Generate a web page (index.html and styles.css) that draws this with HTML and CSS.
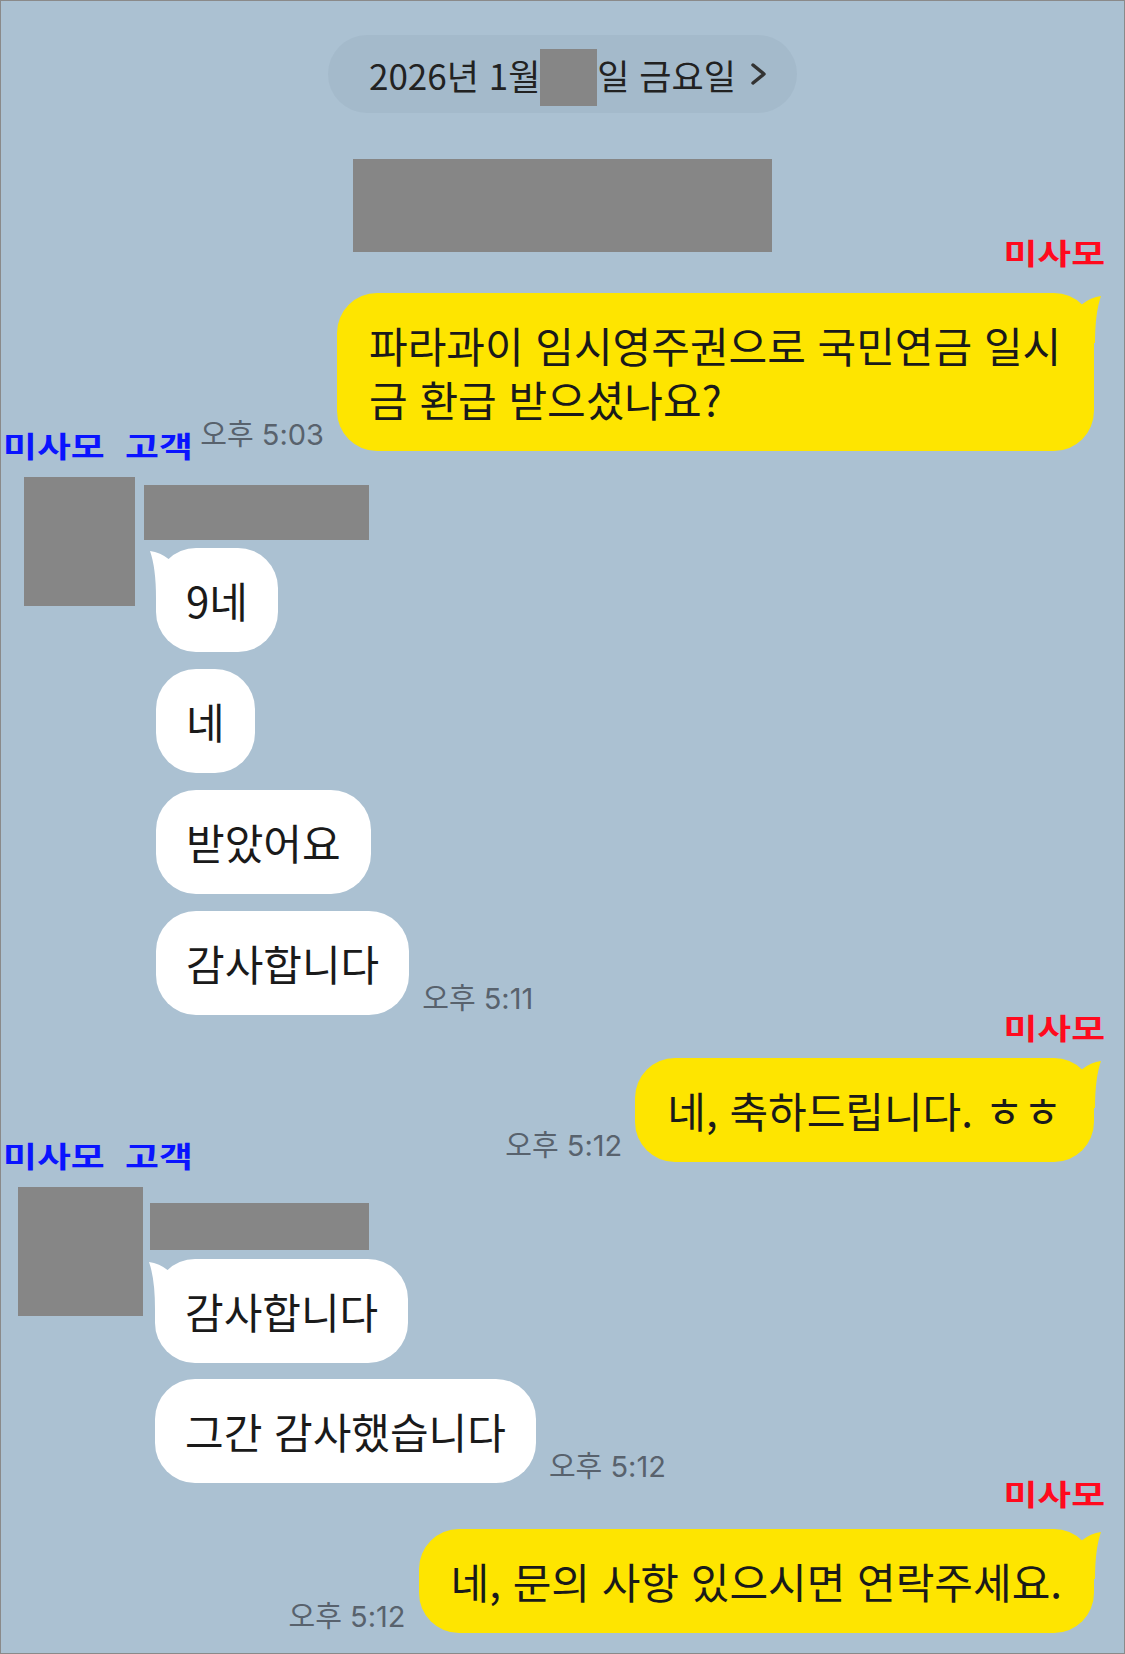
FILE: index.html
```html
<!DOCTYPE html>
<html lang="ko">
  <head>
    <meta charset="UTF-8" />
    <meta name="viewport" content="width=device-width, initial-scale=1.0" />
    <title>채팅</title>
    <link rel="stylesheet" href="styles.css">
  </head>
  <body>
    <div class="screen">
      <div class="date-pill">
        <span>2026년 1월</span>
        <span class="redact day"></span>
        <span>일 금요일</span>
        <svg class="chevron" viewBox="0 0 18 22" width="18" height="22">
          <polyline points="3,2 14,11 3,20" />
        </svg>
      </div>

      <div class="redact notice"></div>

      <div class="tag tag-me first"><span>미사모</span></div>
      <div class="row mine r1">
        <span class="time">오후 5:03</span>
        <div class="bubble wide">
          <svg class="tail" viewBox="0 0 20 50" width="20" height="50"><path d="M0,3 Q10,4 20,12 L20,50 L6,50 Q6,20 0,3 Z" /></svg>
          파라과이 임시영주권으로 국민연금 일시금 환급 받으셨나요?
        </div>
      </div>

      <div class="tag tag-them t1"><span>미사모 고객</span></div>
      <div class="friend f1">
        <div class="redact avatar"></div>
        <div class="friend-body">
          <div class="redact name-box"></div>
          <div class="row">
            <div class="bubble">
              <svg class="tail" viewBox="0 0 20 50" width="20" height="50"><path d="M0,3 Q10,4 20,12 L20,50 L6,50 Q6,20 0,3 Z" /></svg>
              9네
            </div>
          </div>
          <div class="row"><div class="bubble">네</div></div>
          <div class="row"><div class="bubble">받았어요</div></div>
          <div class="row">
            <div class="bubble">감사합니다</div>
            <span class="time">오후 5:11</span>
          </div>
        </div>
      </div>

      <div class="tag tag-me second"><span>미사모</span></div>
      <div class="row mine r2">
        <span class="time">오후 5:12</span>
        <div class="bubble">
          <svg class="tail" viewBox="0 0 20 50" width="20" height="50"><path d="M0,3 Q10,4 20,12 L20,50 L6,50 Q6,20 0,3 Z" /></svg>
          네, 축하드립니다. ㅎㅎ
        </div>
      </div>

      <div class="tag tag-them t2"><span>미사모 고객</span></div>
      <div class="friend f2">
        <div class="redact avatar"></div>
        <div class="friend-body">
          <div class="redact name-box"></div>
          <div class="row">
            <div class="bubble">
              <svg class="tail" viewBox="0 0 20 50" width="20" height="50"><path d="M0,3 Q10,4 20,12 L20,50 L6,50 Q6,20 0,3 Z" /></svg>
              감사합니다
            </div>
          </div>
          <div class="row">
            <div class="bubble">그간 감사했습니다</div>
            <span class="time">오후 5:12</span>
          </div>
        </div>
      </div>

      <div class="tag tag-me third"><span>미사모</span></div>
      <div class="row mine r3">
        <span class="time">오후 5:12</span>
        <div class="bubble">
          <svg class="tail" viewBox="0 0 20 50" width="20" height="50"><path d="M0,3 Q10,4 20,12 L20,50 L6,50 Q6,20 0,3 Z" /></svg>
          네, 문의 사항 있으시면 연락주세요.
        </div>
      </div>
    </div>
  </body>
</html>
```

FILE: styles.css
```css
html,
body {
  margin: 0;
  padding: 0;
}

body {
  font-family: "Noto Sans CJK KR", "Noto Sans", sans-serif;
  color: #1a1a1a;
}

.screen {
  width: 1125px;
  height: 1654px;
  box-sizing: border-box;
  border: 1px solid #8a8a8a;
  background-color: #abc1d2;
  overflow: hidden;
  display: flex;
  flex-direction: column;
}

.redact {
  background-color: #868686;
}

/* date divider */
.date-pill {
  align-self: center;
  margin-top: 34px;
  width: 469px;
  height: 78px;
  box-sizing: border-box;
  padding-left: 41px;
  border-radius: 39px;
  background-color: rgba(60, 80, 100, 0.06);
  display: flex;
  align-items: center;
  font-size: 35px;
  color: #222;
  white-space: pre;
}

.date-pill .day {
  width: 57px;
  height: 57px;
  margin-top: 7px;
}

.chevron {
  margin-left: 14px;
  fill: none;
  stroke: #333;
  stroke-width: 3.5;
  stroke-linecap: round;
  stroke-linejoin: round;
}

.notice {
  align-self: center;
  margin-top: 46px;
  width: 419px;
  height: 93px;
}

/* red / blue labels */
.tag {
  height: 30px;
  line-height: 30px;
  font-size: 29px;
  font-weight: 700;
}

.tag span {
  display: inline-block;
  transform: scaleX(1.27);
  word-spacing: 8px;
}

.tag-me {
  align-self: flex-end;
  padding-right: 19px;
  color: #ff0a1e;
}

.tag-me span {
  transform-origin: right center;
}

.tag-them {
  align-self: flex-start;
  padding-left: 2px;
  color: #0a14ff;
}

.tag-them span {
  transform-origin: left center;
}

.tag-me.first {
  margin-top: -15px;
}

.tag-me.second {
  margin-top: -3px;
}

.tag-me.third {
  margin-top: -5px;
}

.tag-them.t1 {
  margin-top: -21px;
}

.tag-them.t2 {
  margin-top: -22px;
}

/* message rows */
.row {
  display: flex;
  align-items: flex-end;
  gap: 13px;
}

.mine {
  justify-content: flex-end;
  padding-right: 30px;
}

.r1 {
  margin-top: 26px;
}

.r2 {
  margin-top: 16px;
}

.r3 {
  margin-top: 21px;
}

.bubble {
  position: relative;
  box-sizing: border-box;
  padding: 25px 30px;
  line-height: 54px;
  font-size: 42px;
  border-radius: 40px;
  background-color: #fff;
}

.bubble .tail {
  position: absolute;
  top: 0;
  left: -6px;
  fill: #fff;
}

.mine .bubble {
  padding: 25px 32px;
  max-width: 757px;
  background-color: #fee500;
}

.mine .bubble .tail {
  left: auto;
  right: -7px;
  transform: scaleX(-1);
  fill: #fee500;
}

.time {
  flex-shrink: 0;
  margin-bottom: 1px;
  font-family: Inter, "Noto Sans CJK KR", sans-serif;
  font-size: 29px;
  line-height: 30px;
  color: #58626d;
  white-space: nowrap;
}

/* friend groups */
.friend {
  display: flex;
  align-items: flex-start;
  margin-top: 17px;
}

.friend-body .row + .row {
  margin-top: 17px;
}

.f1 .avatar {
  margin-left: 23px;
  width: 111px;
  height: 129px;
}

.f1 .friend-body {
  margin-left: 9px;
}

.f1 .name-box {
  margin-top: 8px;
  width: 225px;
  height: 55px;
}

.f1 .row {
  padding-left: 12px;
}

.f1 .name-box + .row {
  margin-top: 8px;
}

.f2 .avatar {
  margin-left: 17px;
  width: 125px;
  height: 129px;
}

.f2 .friend-body {
  margin-left: 7px;
}

.f2 .name-box {
  margin-top: 16px;
  width: 219px;
  height: 47px;
}

.f2 .row {
  padding-left: 5px;
}

.f2 .name-box + .row {
  margin-top: 9px;
}

.f2 .row + .row {
  margin-top: 16px;
}
```
